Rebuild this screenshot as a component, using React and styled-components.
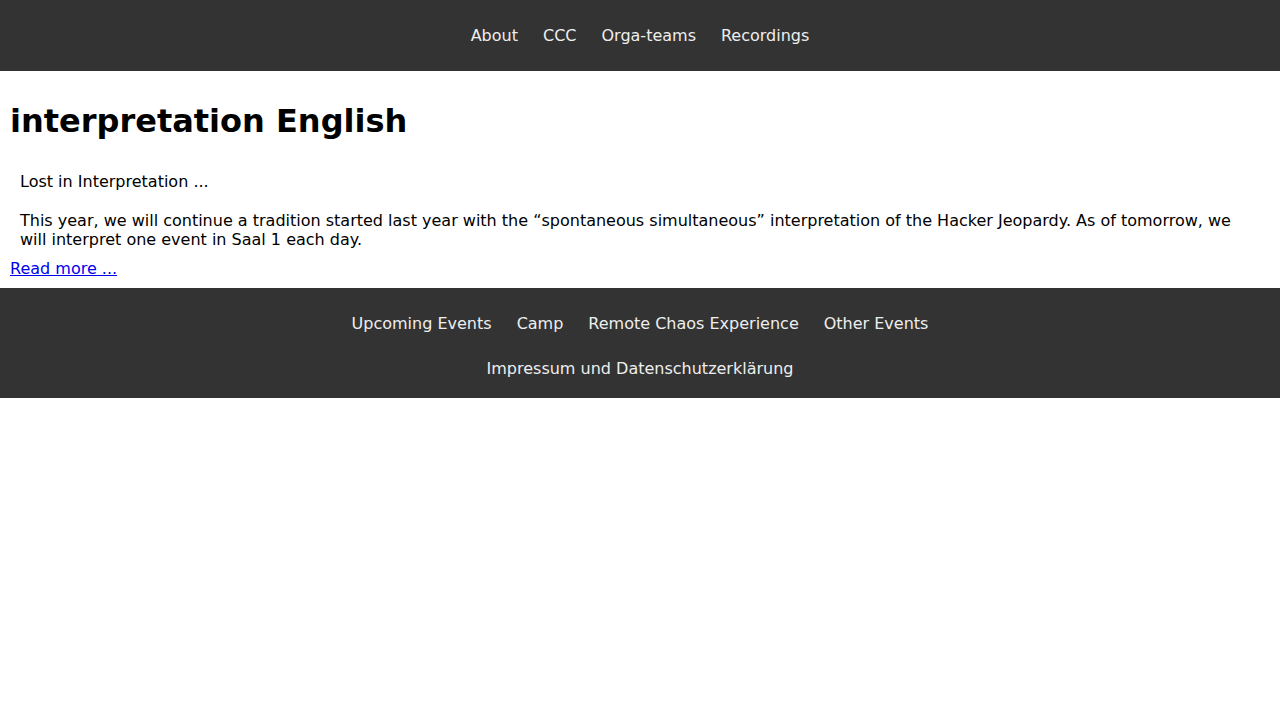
import styled, { createGlobalStyle } from "styled-components";

const GlobalStyle = createGlobalStyle`
  body {
    margin: 0;
    font-family: "DejaVu Sans", sans-serif;
    font-size: 16px;
    background: #fff;
    color: #000;
  }
`;

const Header = styled.header`
  background: #333;
  height: 71px;
  display: flex;
  align-items: center;
  justify-content: center;
`;

const NavList = styled.nav`
  display: flex;
  justify-content: center;
  gap: 25px;
`;

const NavLink = styled.a`
  color: #eee;
  text-decoration: none;
  font-size: 16px;
`;

const Main = styled.main`
  padding: 10px;
`;

const Title = styled.h1`
  font-size: 32px;
  font-weight: bold;
  margin: 21.44px 0;
`;

const Description = styled.div`
  padding: 10px 10px 9px;
  line-height: 19.5px;
`;

const ReadMore = styled.a`
  color: #00e;
  text-decoration: underline;
  line-height: 19px;
  display: inline-block;
`;

const Footer = styled.footer`
  background: #333;
  padding: 26px 0 20px;
  display: flex;
  flex-direction: column;
  gap: 26px;
`;

export default function App() {
  const headerLinks = ["About", "CCC", "Orga-teams", "Recordings"];
  const footerLinks = [
    "Upcoming Events",
    "Camp",
    "Remote Chaos Experience",
    "Other Events",
  ];

  return (
    <>
      <GlobalStyle />
      <Header>
        <NavList>
          {headerLinks.map((l) => (
            <NavLink key={l} href="#">
              {l}
            </NavLink>
          ))}
        </NavList>
      </Header>
      <Main>
        <Title>interpretation English</Title>
        <Description>
          Lost in Interpretation ...
          <br />
          <br />
          This year, we will continue a tradition started last year with the
          “spontaneous simultaneous” interpretation of the Hacker Jeopardy. As
          of tomorrow, we will interpret one event in Saal 1 each day.
        </Description>
        <ReadMore href="#">Read more ...</ReadMore>
      </Main>
      <Footer>
        <NavList>
          {footerLinks.map((l) => (
            <NavLink key={l} href="#">
              {l}
            </NavLink>
          ))}
        </NavList>
        <NavList>
          <NavLink href="#">Impressum und Datenschutzerklärung</NavLink>
        </NavList>
      </Footer>
    </>
  );
}
